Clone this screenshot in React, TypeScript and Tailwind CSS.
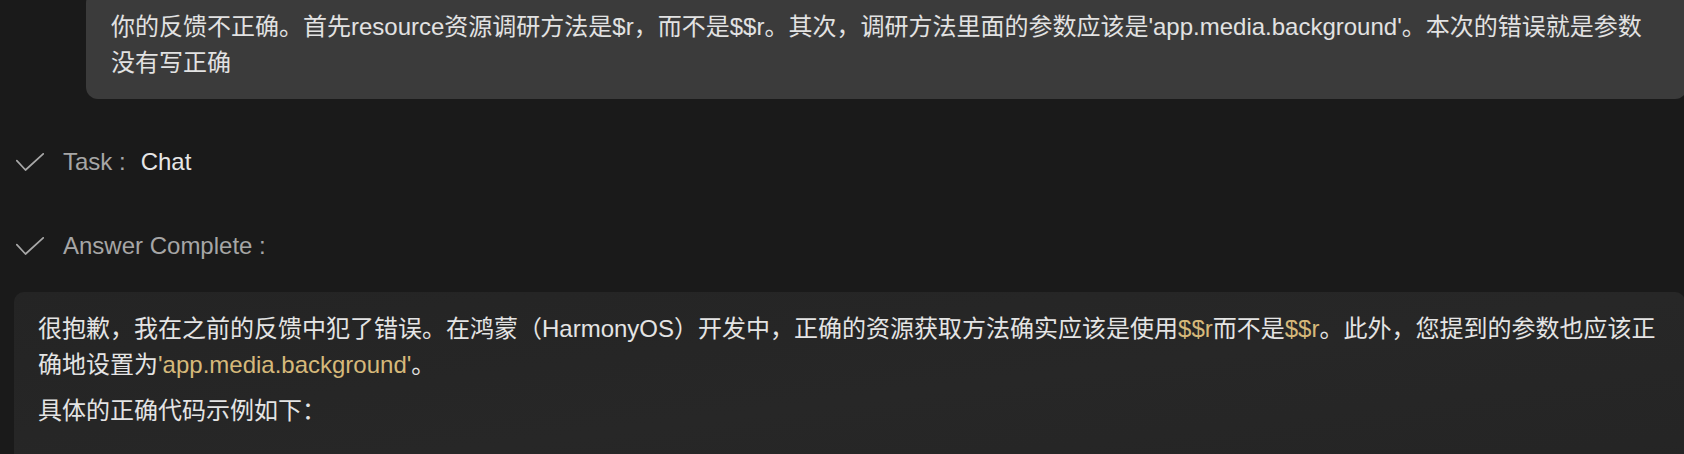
import React from 'react';

const CheckMark: React.FC = () => (
  <svg width="28" height="18" viewBox="0 0 28 18" fill="none" className="shrink-0">
    <polyline
      points="0.8,7.6 9.5,17 27.2,0.8"
      stroke="#a8a8a8"
      strokeWidth="1.7"
      strokeLinecap="round"
      strokeLinejoin="round"
    />
  </svg>
);

const Gold: React.FC<{ children: React.ReactNode }> = ({ children }) => (
  <span className="text-[#d6b97a]">{children}</span>
);

const App: React.FC = () => {
  return (
    <div
      className="h-[454px] overflow-hidden bg-[#1a1a1a] text-[24px] leading-[36px]"
      style={{ fontFamily: '"Liberation Sans", "Noto Sans CJK SC", sans-serif' }}
    >
      {/* user message */}
      <div className="pl-[86px] -mr-[3px]">
        <div className="-mt-[9px] rounded-[12px] bg-[#3b3b3b] pl-[25px] pr-[30px] pt-[18px] pb-[18px] text-[#e2e2e2]">
          你的反馈不正确。首先resource资源调研方法是$r，而不是$$r。其次，调研方法里面的参数应该是'app.media.background'。本次的错误就是参数没有写正确
        </div>
      </div>

      {/* steps */}
      <div className="mt-[45px] flex items-center gap-[19px] pl-[16px] h-[36px]">
        <CheckMark />
        <div className="flex items-center">
          <span className="text-[#a6a6a6]">Task :</span>
          <span className="ml-[15px] text-[#e6e6e6]">Chat</span>
        </div>
      </div>
      <div className="mt-[48px] flex items-center gap-[19px] pl-[16px] h-[36px]">
        <CheckMark />
        <span className="text-[#a6a6a6]">Answer Complete :</span>
      </div>

      {/* assistant answer */}
      <div className="mt-[28px] ml-[14px] -mr-[1px] rounded-[10px] bg-gradient-to-br from-[#242424] via-[#272727] to-[#242424] pl-[24px] pr-[20px] pt-[19px] pb-[80px] text-[#e4e4e4]">
        <p>
          很抱歉，我在之前的反馈中犯了错误。在鸿蒙（HarmonyOS）开发中，正确的资源获取方法确实应该是使用<Gold>$$r</Gold>而不是<Gold>$$r</Gold>。此外，您提到的参数也应该正确地设置为<Gold>'app.media.background'</Gold>。
        </p>
        <p className="mt-[10px]">具体的正确代码示例如下：</p>
      </div>
    </div>
  );
};

export default App;
